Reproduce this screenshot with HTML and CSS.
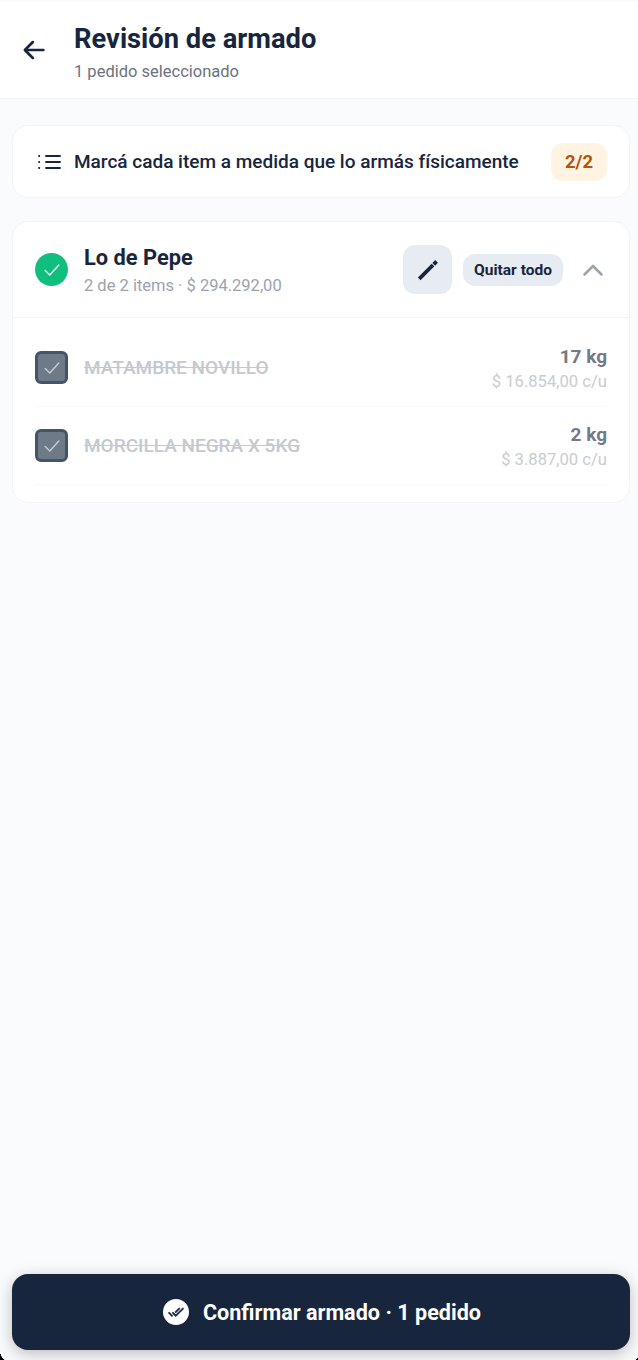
FILE: index.html
```html
<!DOCTYPE html>
<html lang="es">
<head>
    <meta charset="UTF-8">
    <meta name="viewport" content="width=device-width, initial-scale=1.0">
    <title>Revisión de armado</title>
    <link rel="stylesheet" href="styles.css">
</head>
<body>
    <div class="screen">
        <header class="header">
            <button class="back-btn" type="button" aria-label="Volver">
                <svg width="28" height="28" viewBox="0 0 24 24" fill="none" stroke="#17263c" stroke-width="2.3" stroke-linecap="round" stroke-linejoin="round"><path d="M20 12H4.5"/><path d="M11 5.2 4.2 12l6.8 6.8"/></svg>
            </button>
            <div>
                <h1>Revisión de armado</h1>
                <p class="header-sub">1 pedido seleccionado</p>
            </div>
        </header>

        <main class="content">
            <div class="hint card">
                <svg class="hint-icon" width="24" height="24" viewBox="0 0 24 24" fill="none" stroke="#17263c" stroke-width="1.8" stroke-linecap="round"><path d="M9 6H23"/><path d="M9 12H23"/><path d="M9 18H23"/><path d="M2 6h.3"/><path d="M2 12h.3"/><path d="M2 18h.3"/></svg>
                <p class="hint-text">Marcá cada item a medida que lo armás físicamente</p>
                <span class="counter">2/2</span>
            </div>

            <section class="order card">
                <div class="order-head">
                    <span class="status-dot">
                        <svg width="20" height="20" viewBox="0 0 20 20" fill="none" stroke="#fff" stroke-width="1.3" stroke-linecap="round" stroke-linejoin="round"><path d="M3.2 10.5 7.8 15 16.8 5"/></svg>
                    </span>
                    <div class="order-info">
                        <h2>Lo de Pepe</h2>
                        <p>2 de 2 items · $ 294.292,00</p>
                    </div>
                    <button class="edit-btn" type="button" aria-label="Editar">
                        <svg width="24" height="24" viewBox="0 0 24 24" fill="none" stroke="#17263c" stroke-width="3.8"><path d="M3.2 20.8 17 7"/><path d="M17.7 6.3 20.6 3.4"/></svg>
                    </button>
                    <button class="clear-btn" type="button">Quitar todo</button>
                    <svg class="chevron" width="24" height="24" viewBox="0 0 24 24" fill="none" stroke="#9ca3af" stroke-width="2.6" stroke-linecap="round" stroke-linejoin="round"><path d="M3.5 16.5 12 8l8.5 8.5"/></svg>
                </div>

                <ul class="items">
                    <li class="item">
                        <span class="checkbox">
                            <svg width="20" height="20" viewBox="0 0 20 20" fill="none" stroke="#c9ced6" stroke-width="1.3" stroke-linecap="round" stroke-linejoin="round"><path d="M3.2 10.5 7.8 15 16.8 5"/></svg>
                        </span>
                        <span class="item-name">MATAMBRE NOVILLO</span>
                        <div class="item-qty">
                            <strong>17 kg</strong>
                            <span>$ 16.854,00 c/u</span>
                        </div>
                    </li>
                    <li class="item">
                        <span class="checkbox">
                            <svg width="20" height="20" viewBox="0 0 20 20" fill="none" stroke="#c9ced6" stroke-width="1.3" stroke-linecap="round" stroke-linejoin="round"><path d="M3.2 10.5 7.8 15 16.8 5"/></svg>
                        </span>
                        <span class="item-name">MORCILLA NEGRA X 5KG</span>
                        <div class="item-qty">
                            <strong>2 kg</strong>
                            <span>$ 3.887,00 c/u</span>
                        </div>
                    </li>
                </ul>
            </section>
        </main>

        <footer class="footer">
            <button class="confirm-btn" type="button">
                <span class="confirm-icon">
                    <svg width="16" height="16" viewBox="0 0 24 24" fill="#17263c" stroke="#17263c" stroke-width="0.9"><path d="M18 7l-1.41-1.41-6.34 6.34 1.41 1.41L18 7zm4.24-1.41L11.66 16.17 7.48 12l-1.41 1.41L11.66 19l12-12-1.42-1.41zM.41 13.41L6 19l1.41-1.41L1.83 12 .41 13.41z"/></svg>
                </span>
                Confirmar armado · 1 pedido
            </button>
        </footer>

        <span class="corner corner-left"></span>
        <span class="corner corner-right"></span>
    </div>
</body>
</html>
```

FILE: styles.css
```css
* {
    margin: 0;
    padding: 0;
    box-sizing: border-box;
    font-family: 'Roboto', 'Liberation Sans', sans-serif;
}

:root {
    --navy: #17263c;
    --muted: #6b7280;
    --soft: #9ca3af;
    --line: #f2f4f7;
    --bg: #fafbfd;
}

body {
    background: var(--bg);
    color: var(--navy);
}

button {
    border: none;
    cursor: pointer;
}

.screen {
    position: relative;
    height: 1360px;
    display: flex;
    flex-direction: column;
    overflow: hidden;
    padding-top: 2px;
}

.header {
    height: 97px;
    background: white;
    border-bottom: 1px solid var(--line);
    display: flex;
    align-items: flex-start;
    padding: 20px 0 0 20px;
    gap: 26px;
}

.back-btn {
    background: none;
    width: 28px;
    height: 28px;
    margin-top: 14px;
    display: flex;
}

.header h1 {
    font-size: 27.3px;
    line-height: 34px;
    font-weight: 700;
}

.header-sub {
    font-size: 16.5px;
    line-height: 20px;
    margin-top: 6px;
    color: var(--muted);
}

.content {
    flex: 1;
    padding: 26px 8px 0 12px;
}

.card {
    background: white;
    border: 1px solid var(--line);
    border-radius: 16px;
}

.hint {
    height: 73px;
    display: flex;
    align-items: center;
    padding: 0 22px 0 24px;
}

.hint-icon {
    flex-shrink: 0;
    margin-right: 13px;
}

.hint-text {
    flex: 1;
    font-size: 19px;
    font-weight: 500;
}

.counter {
    width: 56px;
    height: 38px;
    border-radius: 12px;
    background: #fff4e2;
    color: #b45309;
    font-size: 18.5px;
    font-weight: 700;
    display: flex;
    align-items: center;
    justify-content: center;
}

.order {
    margin-top: 23px;
    height: 282px;
}

.order-head {
    height: 96px;
    border-bottom: 1px solid var(--line);
    display: flex;
    align-items: center;
    padding: 0 24px 0 22px;
}

.status-dot {
    width: 33px;
    height: 33px;
    border-radius: 50%;
    background: #10bf7e;
    display: flex;
    align-items: center;
    justify-content: center;
    flex-shrink: 0;
    margin-right: 16px;
}

.order-info {
    flex: 1;
}

.order-info h2 {
    font-size: 21.8px;
    line-height: 28px;
    font-weight: 700;
    padding-top: 1px;
}

.order-info p {
    font-size: 16.5px;
    line-height: 20px;
    margin-top: 4px;
    color: var(--soft);
}

.edit-btn {
    width: 49px;
    height: 49px;
    border-radius: 12px;
    background: #e7ecf2;
    display: flex;
    align-items: center;
    justify-content: center;
    margin-right: 11px;
}

.clear-btn {
    width: 100px;
    height: 32px;
    border-radius: 12px;
    background: #e7ecf2;
    color: var(--navy);
    font-size: 15.5px;
    font-weight: 700;
    margin-right: 18px;
}

.chevron {
    flex-shrink: 0;
}

.items {
    list-style: none;
    padding: 11px 22px 0;
}

.item {
    height: 78px;
    border-bottom: 1px solid #f8f9fb;
    display: flex;
    align-items: center;
}

.checkbox {
    width: 33px;
    height: 33px;
    border-radius: 6px;
    border: 3px solid #465468;
    background: #6f7a89;
    display: flex;
    align-items: center;
    justify-content: center;
    flex-shrink: 0;
    margin-right: 16px;
}

.item-name {
    flex: 1;
    font-size: 19px;
    font-weight: 500;
    color: #c4c9d0;
    text-decoration: line-through;
}

.item-qty {
    display: flex;
    flex-direction: column;
    align-items: flex-end;
    padding-top: 2px;
}

.item-qty strong {
    font-size: 19px;
    line-height: 24px;
    color: #737a86;
}

.item-qty span {
    font-size: 16.6px;
    line-height: 20px;
    margin-top: 3px;
    color: #c9ccd1;
}

.footer {
    padding: 0 8px 10px 12px;
}

.confirm-btn {
    width: 618px;
    height: 76px;
    padding-left: 2px;
    border-radius: 16px;
    background: var(--navy);
    color: white;
    font-size: 21.6px;
    font-weight: 700;
    display: flex;
    align-items: center;
    justify-content: center;
    gap: 14px;
    box-shadow: 0 4px 16px rgba(0,0,0,0.25);
}

.confirm-icon {
    width: 26px;
    height: 26px;
    border-radius: 50%;
    background: white;
    display: flex;
    align-items: center;
    justify-content: center;
}

.corner {
    position: absolute;
    bottom: 0;
}

.corner-left {
    left: 0;
    width: 6px;
    height: 10px;
    background: radial-gradient(ellipse 6px 10px at 100% 0, transparent 98%, #000 100%);
}

.corner-right {
    right: 0;
    width: 3px;
    height: 5px;
    background: radial-gradient(ellipse 3px 5px at 0 0, transparent 98%, #000 100%);
}
```
